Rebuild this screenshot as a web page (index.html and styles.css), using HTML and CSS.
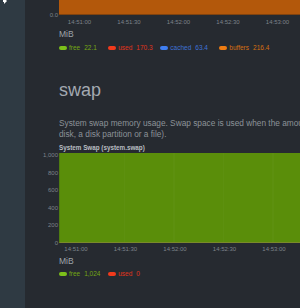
FILE: index.html
```html
<!DOCTYPE html>
<html lang="en">
<head>
    <meta charset="UTF-8">
    <meta name="viewport" content="width=device-width, initial-scale=1.0">
    <title>swap</title>
    <link rel="stylesheet" href="styles.css">
</head>
<body>

    <div class="sidebar">
        <svg class="toggle" width="8" height="6" viewBox="0 0 8 6">
            <path d="M3 -2 L6 1 L3 4 Z" fill="#ffffff"/>
            <rect x="2" y="0" width="1.5" height="2" fill="#ffffff"/>
        </svg>
    </div>

    <div class="main">
        <!-- memory chart, only its bottom is visible -->
        <section class="chart chart-mem">
            <div class="plot-row">
                <div class="y-axis y-axis-end"><span>0.0</span></div>
                <div class="plot plot-orange"></div>
            </div>
            <div class="x-axis x-axis-mem">
                <span>14:51:00</span><span>14:51:30</span><span>14:52:00</span><span>14:52:30</span><span>14:53:00</span>
            </div>
            <div class="units">MiB</div>
            <div class="legend legend-mem">
                <div class="legend-item free"><i></i><span class="name">free</span><span class="value">22.1</span></div>
                <div class="legend-item used"><i></i><span class="name">used</span><span class="value">170.3</span></div>
                <div class="legend-item cached"><i></i><span class="name">cached</span><span class="value">63.4</span></div>
                <div class="legend-item buffers"><i></i><span class="name">buffers</span><span class="value">216.4</span></div>
            </div>
        </section>

        <h1 class="section-title">swap</h1>
        <p class="section-desc">System swap memory usage. Swap space is used when the amount of physical memory (RAM) is full. When the system needs more memory resources and the RAM is full, inactive pages in memory are moved to the swap space (usually a<br>disk, a disk partition or a file).</p>

        <section class="chart chart-swap">
            <div class="chart-title">System Swap (system.swap)</div>
            <div class="plot-row">
                <div class="y-axis y-axis-full">
                    <span>1,000</span><span>800</span><span>600</span><span>400</span><span>200</span><span>0</span>
                </div>
                <div class="plot plot-green"></div>
            </div>
            <div class="x-axis x-axis-swap">
                <span>14:51:00</span><span>14:51:30</span><span>14:52:00</span><span>14:52:30</span><span>14:53:00</span>
            </div>
            <div class="units">MiB</div>
            <div class="legend legend-swap">
                <div class="legend-item free"><i></i><span class="name">free</span><span class="value">1,024</span></div>
                <div class="legend-item used"><i></i><span class="name">used</span><span class="value">0</span></div>
            </div>
        </section>
    </div>

</body>
</html>
```

FILE: styles.css
```css
body {
    margin: 0;
    background-color: #262a30;
    font-family: "Liberation Sans", Arial, sans-serif;
    display: flex;
    height: 308px;
    overflow: hidden;
}
.sidebar {
    width: 24px;
    flex-shrink: 0;
    background-color: #2f3a43;
    padding-left: 1px;
}
.toggle {
    display: block;
}
.main {
    flex: 1;
    min-width: 0;
    padding-left: 34px;
    overflow: hidden;
}
.plot-row {
    display: grid;
    grid-template-columns: 34px 1fr;
    margin-left: -34px;
}
.y-axis {
    display: flex;
    flex-direction: column;
    align-items: flex-end;
    padding-right: 1px;
    font-size: 6px;
    line-height: 7px;
    color: #7d838a;
}
.y-axis-end {
    justify-content: flex-end;
    margin-bottom: -4px;
}
.y-axis-full {
    justify-content: space-between;
    margin: -1px 0 -4px;
}
.plot-orange {
    height: 14px;
    background-color: #b3580b;
    border-bottom: 1px solid #7f4310;
}
.plot-green {
    height: 89px;
    background-color: #5a8e0a;
    border-left: 1px solid #4f7c12;
    border-bottom: 1px solid #7b8a2a;
    background-image: repeating-linear-gradient(90deg, transparent 0 48px, rgba(255, 255, 255, 0.02) 48px 49.5px);
    background-position: 16px 0;
}
.x-axis {
    display: flex;
    gap: 25.5px;
    font-size: 6px;
    line-height: 12px;
    color: #7d838a;
}
.x-axis span {
    width: 24px;
    flex-shrink: 0;
    text-align: center;
}
.x-axis-mem {
    margin-top: 1px;
    padding-left: 8.5px;
}
.x-axis-swap {
    padding-left: 5px;
}
.units {
    font-size: 8.5px;
    line-height: 12px;
    color: #9ea4aa;
}
.legend {
    display: flex;
    font-size: 6.5px;
    line-height: 12px;
}
.legend-mem {
    margin-top: 2px;
}
.legend-swap {
    margin-top: 1px;
}
.legend-item {
    display: flex;
    align-items: center;
    margin-right: 4px;
}
.legend-item i {
    width: 8px;
    height: 3.5px;
    border-radius: 2px;
    margin-right: 2px;
}
.legend-item .value {
    margin-left: 4px;
    min-width: 20px;
}
.free { color: #74a614; }
.free i { background-color: #7cc01a; }
.used { color: #e0341c; }
.used i { background-color: #f23a1c; }
.cached { color: #3f72d6; }
.cached i { background-color: #3f7ef0; }
.buffers { color: #d56f10; }
.buffers i { background-color: #ee7c12; }
.section-title {
    margin: 24px 0 0;
    font-size: 18px;
    line-height: 24px;
    font-weight: normal;
    color: #a3a9b0;
}
.section-desc {
    margin: 16px 0 0;
    font-size: 8.3px;
    line-height: 11px;
    color: #8c9298;
    white-space: nowrap;
}
.chart-title {
    margin-top: 4px;
    font-size: 6.3px;
    line-height: 8px;
    font-weight: bold;
    color: #b9bec3;
}
.chart-swap .plot-row {
    margin-top: 1px;
}
```
